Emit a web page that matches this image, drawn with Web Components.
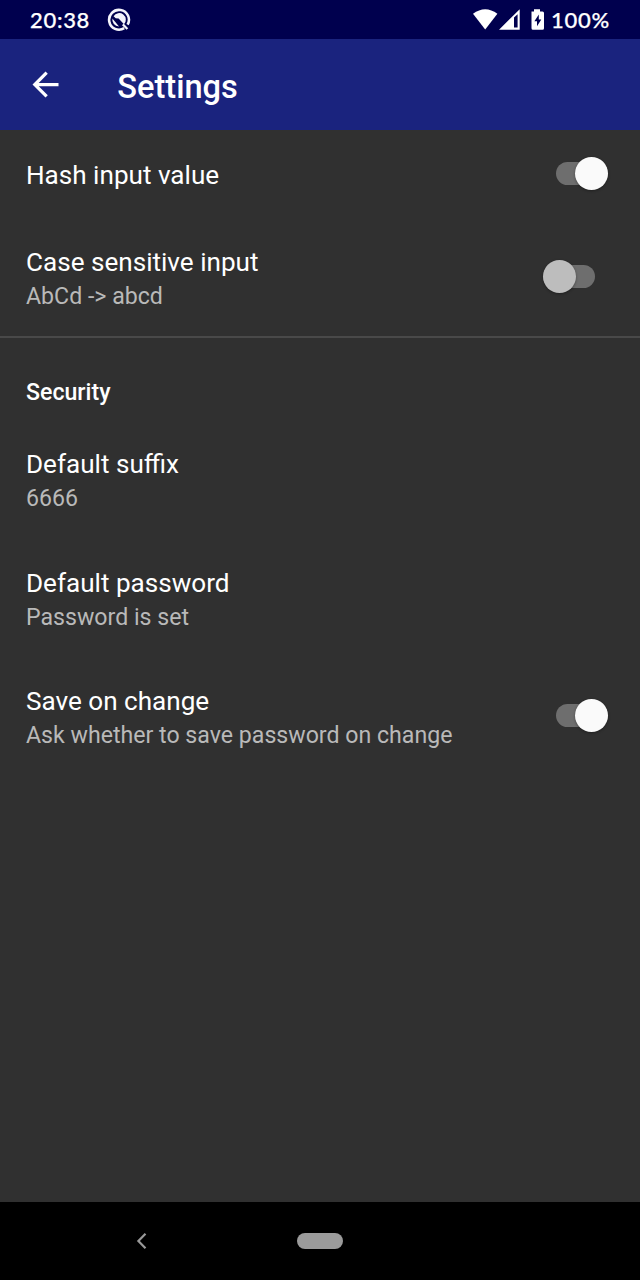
<!DOCTYPE html>
<html lang="en">
<head>
<meta charset="utf-8">
<title>Settings</title>
<style>
html, body { margin: 0; height: 100%; background: #303030; overflow: hidden; }
body { font-family: Roboto, "Liberation Sans", sans-serif; color: #fff; }
</style>
</head>
<body>
<settings-screen></settings-screen>
<script>
const define = (name, html) => {
  const template = document.createElement('template');
  template.innerHTML = html;
  customElements.define(name, class extends HTMLElement {
    constructor() {
      super();
      this.attachShadow({ mode: 'open' }).append(template.content.cloneNode(true));
    }
  });
};

define('status-bar', `
<style>
:host { display: flex; align-items: center; height: 39px; box-sizing: border-box; padding: 1px 30px 0; background: #00004e; font: 500 22px/36px Lato, sans-serif; -webkit-text-stroke: .25px #fff; }
svg { display: block; flex: none; margin-top: -1px; }
.time { width: 77px; letter-spacing: .7px; white-space: nowrap; }
.system { margin-left: auto; display: flex; align-items: center; }
.level { width: 58px; margin-left: -1px; padding-right: 1px; letter-spacing: .7px; white-space: nowrap; }
</style>
<span class="time">20:38</span>
<svg width="24" height="24" viewBox="0 0 24 24" fill="none">
  <path d="M17.2 20.2A9.9 9.9 0 1 1 20.6 16.7" stroke="#f4f4fb" stroke-width="2.6"/>
  <path d="M6.6 8.2A6.6 6.6 0 1 1 17 16.2L11.6 10.6L8.7 10.3Z" fill="#f4f4fb"/>
  <path d="M5.4 10.6L12 18.4A6.6 6.6 0 0 1 5.4 10.6Z" fill="#f4f4fb"/>
  <path d="M15.8 16.4L20.4 21" stroke="#f4f4fb" stroke-width="2.2"/>
</svg>
<div class="system">
<svg width="79" height="24" viewBox="0 0 79 24" fill="#fff">
  <path d="M0 5.8Q12.2-3.3 24.4 5.8L12.2 21.6Z"/>
  <path d="M26 21.7L46.7 1.2V21.7ZM41 9.6V19.6H44.6V6.2Z" fill-rule="evenodd"/>
  <path d="M58.5 3.4H61V1.2H67V3.4H69.5Q71 3.4 71 4.9V20.2Q71 21.7 69.5 21.7H60Q58.5 21.7 58.5 20.2Z"/>
  <path d="M65.8 6.6L61.4 13.2H64V18.2L68.3 11.6H65.8Z" fill="#00004e"/>
</svg>
<span class="level">100%</span>
</div>`);

define('app-bar', `
<style>
:host { display: flex; align-items: center; height: 91px; background: #1a237e; }
svg { display: block; margin-left: 26px; }
h1 { margin: 5px 0 0 52.3px; font-size: 32.6px; font-weight: 500; line-height: 40px; }
</style>
<svg width="39" height="39" viewBox="0 0 24 24" fill="#fff"><path d="M20 11H7.83l5.59-5.59L12 4l-8 8 8 8 1.41-1.41L7.83 13H20z"/></svg>
<h1><slot></slot></h1>`);

define('toggle-switch', `
<style>
:host { display: grid; align-items: center; width: 65px; height: 33px; flex: none; }
i { grid-area: 1/1; display: block; }
.track { width: 52px; height: 23px; border-radius: 12px; background: #6e6e6e; }
.thumb { width: 33px; height: 33px; border-radius: 50%; background: #bdbdbd; box-shadow: 0 1px 3px #0005; }
:host([on]) .track { margin-left: 13px; }
:host([on]) .thumb { justify-self: end; background: #fafafa; }
</style>
<i class="track"></i><i class="thumb"></i>`);

define('preference-row', `
<style>
:host { display: flex; justify-content: space-between; align-items: center; height: 118.5px; box-sizing: border-box; padding: 0 31.8px 0 26px; }
:host([single]) { height: 87.5px; }
.text { padding-top: 4px; }
:host([single]) .text { padding-top: 3px; }
.title { font-size: 26.1px; line-height: 36px; color: #fff; }
.summary { font-size: 23.15px; line-height: 33px; color: #b9b9b9; }
:host([single]) .summary { display: none; }
</style>
<div class="text"><div class="title"><slot></slot></div><div class="summary"><slot name="summary"></slot></div></div>
<slot name="control"></slot>`);

define('preference-header', `
<style>
:host { display: block; height: 83.5px; box-sizing: border-box; border-top: 2px solid #494949; padding: 39px 26px 0; font-size: 23.15px; line-height: 32px; font-weight: 500; }
</style><slot></slot>`);

define('navigation-bar', `
<style>
:host { display: grid; grid-template-columns: 1fr 46px 1fr; align-items: center; height: 78px; background: #000; }
svg { display: block; margin-left: 136px; }
i { display: block; height: 16px; border-radius: 8px; background: #9b9b9b; }
</style>
<svg width="12" height="18" viewBox="0 0 12 18" fill="none" stroke="#999" stroke-width="2.2"><path d="M9.5 1.8L2.4 9l7.1 7.2"/></svg>
<i></i>`);

define('settings-screen', `
<style>
:host { display: flex; flex-direction: column; width: 640px; height: 1280px; background: #303030; }
main { flex: 1; }
</style>
<status-bar></status-bar>
<app-bar>Settings</app-bar>
<main>
<preference-row single>Hash input value<toggle-switch slot="control" on></toggle-switch></preference-row>
<preference-row>Case sensitive input<span slot="summary">AbCd -&gt; abcd</span><toggle-switch slot="control"></toggle-switch></preference-row>
<preference-header>Security</preference-header>
<preference-row>Default suffix<span slot="summary">6666</span></preference-row>
<preference-row>Default password<span slot="summary">Password is set</span></preference-row>
<preference-row>Save on change<span slot="summary">Ask whether to save password on change</span><toggle-switch slot="control" on></toggle-switch></preference-row>
</main>
<navigation-bar></navigation-bar>`);
</script>
</body>
</html>
